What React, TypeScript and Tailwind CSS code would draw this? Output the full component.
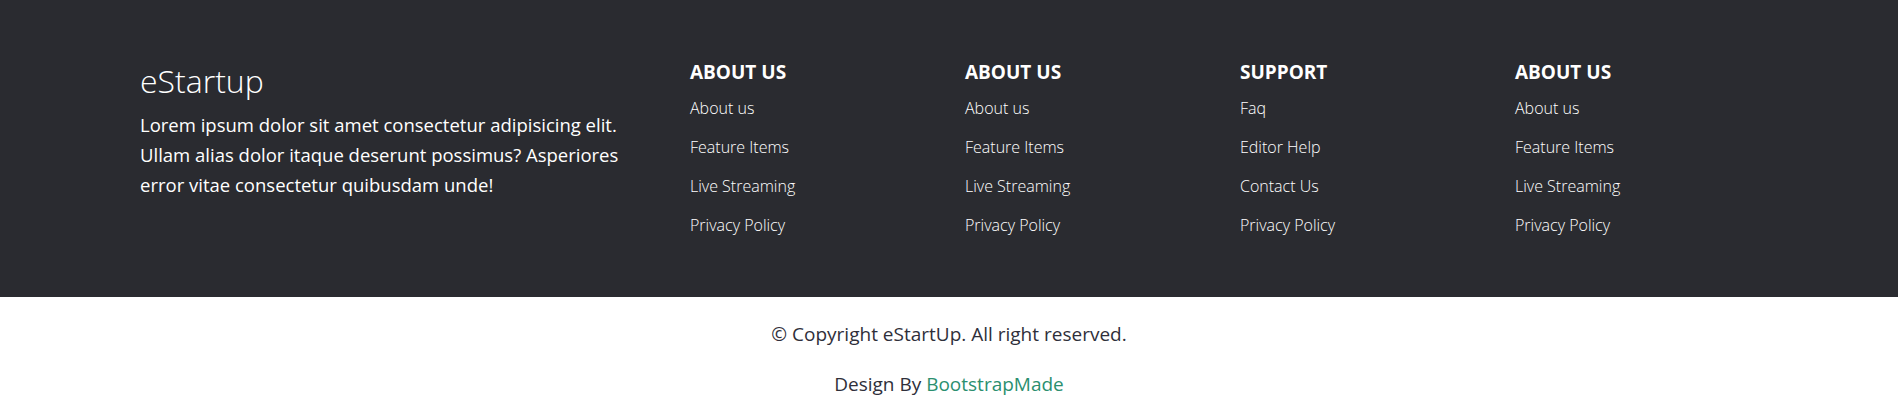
import React from "react";

// footer link columns
const columns = [
  { title: "ABOUT US", links: ["About us", "Feature Items", "Live Streaming", "Privacy Policy"] },
  { title: "ABOUT US", links: ["About us", "Feature Items", "Live Streaming", "Privacy Policy"] },
  { title: "SUPPORT", links: ["Faq", "Editor Help", "Contact Us", "Privacy Policy"] },
  { title: "ABOUT US", links: ["About us", "Feature Items", "Live Streaming", "Privacy Policy"] },
];

export default function App() {
  return (
    <div className="w-full min-h-[412px] bg-white font-['Open_Sans','Noto_Sans',sans-serif]">
      <footer className="bg-[#2a2b30] text-white pt-[60px] pb-[53px]">
        <div className="w-[1650px] mx-auto grid grid-cols-12">
          <div className="col-span-4 px-4">
            <h2 className="text-[32px] font-light leading-[40px] mt-[1px]">eStartup</h2>
            <p className="text-[18.5px] leading-[30px] mt-[9px] max-w-[505px]">
              Lorem ipsum dolor sit amet consectetur adipisicing elit. Ullam alias dolor itaque deserunt possimus? Asperiores error vitae consectetur quibusdam unde!
            </p>
          </div>
          {columns.map((col, i) => (
            <div key={i} className="col-span-2 px-4">
              <h4 className="text-[19px] font-bold leading-[24px]">{col.title}</h4>
              <ul className="mt-[4px]">
                {col.links.map((link) => (
                  <li key={link} className="h-[39px] flex items-center">
                    <a href="#" className="text-[16px] font-light text-white">{link}</a>
                  </li>
                ))}
              </ul>
            </div>
          ))}
        </div>
      </footer>
      <div className="text-center text-[#2f2f3a] text-[19px] pt-[23px]">
        <p className="leading-[28px]">© Copyright eStartUp. All right reserved.</p>
        <p className="leading-[28px] mt-[22px]">
          Design By <a href="#" className="text-[#2b8f6f]">BootstrapMade</a>
        </p>
      </div>
    </div>
  );
}
